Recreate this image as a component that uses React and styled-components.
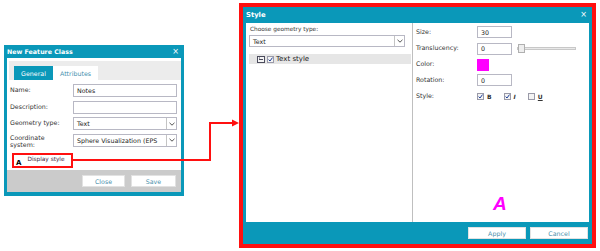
import React from 'react';
import styled, { createGlobalStyle } from 'styled-components';

const TEAL = '#0a98b9';
const RED = '#ff1010';

const GlobalStyle = createGlobalStyle`
  html, body {
    margin: 0;
    padding: 0;
    background: #fff;
  }
  body {
    font-family: 'DejaVu Sans', Verdana, sans-serif;
    color: #333;
  }
`;

const Canvas = styled.div`
  position: relative;
  width: 600px;
  height: 251px;
  overflow: hidden;
  display: flex;
  align-items: flex-start;
  background: #fff;
`;

const FeatureDialog = styled.div`
  box-sizing: border-box;
  width: 180px;
  height: 151px;
  margin: 45px 0 0 4px;
  padding: 0 3px 4px;
  background: ${TEAL};
  display: flex;
  flex-direction: column;
`;

const TitleBar = styled.div`
  display: flex;
  align-items: center;
  justify-content: space-between;
  height: ${p => p.$h}px;
  flex: none;
  padding: 0 2px 0 0;
  color: #fff;
  font-weight: bold;
  font-size: ${p => p.$size || 6.3}px;
`;

const CloseX = styled.span`
  font-size: 8px;
  font-weight: normal;
  line-height: 1;
`;

const FeatureBody = styled.div`
  flex: 1;
  background: #fff;
  display: flex;
  flex-direction: column;
`;

const TabStrip = styled.div`
  display: flex;
  align-items: flex-end;
  margin: 3px 0 0 2px;
  height: 19px;
  padding-left: 5px;
  background: #ececec;
`;

const Tab = styled.div`
  height: 14px;
  width: ${p => p.$w}px;
  display: flex;
  align-items: center;
  justify-content: center;
  font-size: 6.3px;
  background: ${p => (p.$active ? TEAL : '#fff')};
  color: ${p => (p.$active ? '#fff' : '#3f8fae')};
`;

const Form = styled.div`
  display: grid;
  grid-template-columns: 63px 104px;
  grid-auto-rows: 13px;
  row-gap: 3.5px;
  padding: 4px 0 0 3px;
`;

const Label = styled.div`
  font-size: 6.3px;
  color: #333;
  display: flex;
  align-items: center;
  line-height: 6.6px;
  padding-top: ${p => (p.$two ? 3 : 0)}px;
`;

const TextBox = styled.div`
  box-sizing: border-box;
  height: ${p => p.$h || 13}px;
  width: ${p => (p.$w ? `${p.$w}px` : '100%')};
  border: 1px solid #b8b8c4;
  background: #fff;
  font-size: 6.3px;
  padding-left: 3px;
  display: flex;
  align-items: center;
  color: #222;
`;

const Select = styled(TextBox)`
  justify-content: space-between;
  padding-right: 0;
  white-space: nowrap;
  overflow: hidden;
`;

const DropBtn = styled.span`
  flex: none;
  width: 9px;
  height: 100%;
  border-left: 1px solid #c4c4c4;
  display: flex;
  align-items: center;
  justify-content: center;
  background: #fff;
`;

const Callout = styled.div`
  box-sizing: border-box;
  margin: 6px 0 0 5px;
  width: 61px;
  height: 15px;
  border: 2px solid ${RED};
  display: flex;
  align-items: flex-start;
  padding: 0 0 0 2px;
  gap: 6px;
`;

const CalloutMark = styled.span`
  font-size: 7px;
  line-height: 7px;
  font-weight: bold;
  color: #000;
  margin-top: 5px;
`;

const CalloutText = styled.span`
  font-size: 5.8px;
  line-height: 7px;
  color: #3d1d3b;
  margin-top: 1px;
`;

const FeatureFooter = styled.div`
  height: 22px;
  flex: none;
  background: #cbcbcb;
  display: flex;
  justify-content: flex-end;
  align-items: flex-start;
  gap: 6px;
  padding: 5px 5px 0 0;
  box-sizing: border-box;
`;

const Button = styled.div`
  box-sizing: border-box;
  width: ${p => p.$w}px;
  height: 12px;
  background: #fff;
  border: 1px solid #e2e2e2;
  display: flex;
  align-items: center;
  justify-content: center;
  font-size: 6.3px;
  color: #4a90ad;
`;

const StyleDialog = styled.div`
  box-sizing: border-box;
  width: 357px;
  height: 245px;
  margin: 3px 0 0 55px;
  border: 4px solid ${RED};
  background: ${TEAL};
  display: flex;
  flex-direction: column;
  padding: 0 3px;
`;

const StyleContent = styled.div`
  height: 199px;
  flex: none;
  background: #fff;
  display: flex;
`;

const LeftPane = styled.div`
  width: 167px;
  flex: none;
  border-right: 1px solid #bfbfbf;
  padding: 3px 0 0 3px;
  box-sizing: border-box;
`;

const SmallCaption = styled.div`
  font-size: 5.8px;
  color: #333;
  height: 9px;
  padding-left: 1px;
`;

const TreeRow = styled.div`
  margin-top: 7px;
  height: 10px;
  width: 162px;
  background: #e6e6e6;
  display: flex;
  align-items: center;
  padding-left: 8px;
  box-sizing: border-box;
  gap: 2px;
  font-size: 7px;
  color: #222;
`;

const RightPane = styled.div`
  flex: 1;
  padding: 3px 0 0 3px;
  display: grid;
  grid-template-columns: 61px 1fr;
  grid-auto-rows: 13px;
  row-gap: 3px;
  align-content: start;
  position: relative;
`;

const FieldRow = styled.div`
  display: flex;
  align-items: center;
  gap: 5px;
`;

const Swatch = styled.div`
  width: 12px;
  height: 12px;
  background: #ff00ff;
`;

const Slider = styled.div`
  position: relative;
  width: 59px;
  height: 3px;
  border: 1px solid #c8c8c8;
  background: #e8e8e8;
  box-sizing: border-box;
`;

const Thumb = styled.div`
  position: absolute;
  left: 0;
  top: -4px;
  width: 7px;
  height: 9px;
  box-sizing: border-box;
  border: 1px solid #b0b0b0;
  background: #eee;
`;

const Check = styled.span`
  box-sizing: border-box;
  width: 7px;
  height: 7px;
  border: 1px solid #9a9aa8;
  background: #f4f4f4;
  display: inline-flex;
  align-items: center;
  justify-content: center;
  flex: none;
`;

const StyleOpt = styled.span`
  display: inline-flex;
  align-items: center;
  gap: 3px;
  font-size: 6px;
  font-weight: bold;
  font-style: ${p => (p.$italic ? 'italic' : 'normal')};
  text-decoration: ${p => (p.$under ? 'underline' : 'none')};
  color: #333;
  margin-right: 7px;
`;

const BigMark = styled.div`
  position: absolute;
  left: 80px;
  top: 170px;
  font-family: 'Liberation Sans', Arial, sans-serif;
  font-size: 19px;
  font-weight: bold;
  font-style: italic;
  color: #ff00ff;
`;

const StyleFooter = styled.div`
  flex: 1;
  display: flex;
  justify-content: flex-end;
  align-items: flex-start;
  gap: 4px;
  padding: 5px 1px 0 0;
`;

const Connector = styled.svg`
  position: absolute;
  left: 0;
  top: 0;
  pointer-events: none;
`;

const Chevron = () => (
  <svg width="6" height="4" viewBox="0 0 6 4">
    <path d="M0.5 0.8 L3 3.2 L5.5 0.8" fill="none" stroke="#555" strokeWidth="1" />
  </svg>
);

const Tick = () => (
  <svg width="5" height="5" viewBox="0 0 5 5">
    <path d="M0.6 2.6 L2 4 L4.5 0.6" fill="none" stroke="#1c3f9a" strokeWidth="1" />
  </svg>
);

const ListIcon = () => (
  <svg width="8" height="7" viewBox="0 0 8 7">
    <rect x="0.5" y="0.5" width="7" height="6" fill="#f4f4f4" stroke="#4b4b5c" />
    <path d="M2 3.5 H6 M2 2 H3" stroke="#4b4b5c" strokeWidth="1" />
  </svg>
);

const App = () => (
  <>
    <GlobalStyle />
    <Canvas>
      <FeatureDialog>
        <TitleBar $h={13}>
          <span>New Feature Class</span>
          <CloseX>×</CloseX>
        </TitleBar>
        <FeatureBody>
          <TabStrip>
            <Tab $active $w={39}>General</Tab>
            <Tab $w={45}>Attributes</Tab>
          </TabStrip>
          <Form>
            <Label>Name:</Label>
            <TextBox>Notes</TextBox>
            <Label>Description:</Label>
            <TextBox />
            <Label>Geometry type:</Label>
            <Select>
              Text
              <DropBtn><Chevron /></DropBtn>
            </Select>
            <Label $two>Coordinate<br />system:</Label>
            <Select>
              Sphere Visualization (EPS
              <DropBtn><Chevron /></DropBtn>
            </Select>
          </Form>
          <Callout>
            <CalloutMark>A</CalloutMark>
            <CalloutText>Display style</CalloutText>
          </Callout>
        </FeatureBody>
        <FeatureFooter>
          <Button $w={43}>Close</Button>
          <Button $w={45}>Save</Button>
        </FeatureFooter>
      </FeatureDialog>

      <StyleDialog>
        <TitleBar $h={16} $size={6.8}>
          <span>Style</span>
          <CloseX>×</CloseX>
        </TitleBar>
        <StyleContent>
          <LeftPane>
            <SmallCaption>Choose geometry type:</SmallCaption>
            <Select $h={12} $w={156}>
              Text
              <DropBtn><Chevron /></DropBtn>
            </Select>
            <TreeRow>
              <ListIcon />
              <Check><Tick /></Check>
              <span>Text style</span>
            </TreeRow>
          </LeftPane>
          <RightPane>
            <Label>Size:</Label>
            <TextBox $w={35} $h={12}>30</TextBox>
            <Label>Translucency:</Label>
            <FieldRow>
              <TextBox $w={35} $h={12}>0</TextBox>
              <Slider><Thumb /></Slider>
            </FieldRow>
            <Label>Color:</Label>
            <FieldRow><Swatch /></FieldRow>
            <Label>Rotation:</Label>
            <TextBox $w={35} $h={12}>0</TextBox>
            <Label>Style:</Label>
            <FieldRow>
              <StyleOpt><Check><Tick /></Check>B</StyleOpt>
              <StyleOpt $italic><Check><Tick /></Check>I</StyleOpt>
              <StyleOpt $under><Check />U</StyleOpt>
            </FieldRow>
            <BigMark>A</BigMark>
          </RightPane>
        </StyleContent>
        <StyleFooter>
          <Button $w={58}>Apply</Button>
          <Button $w={58}>Cancel</Button>
        </StyleFooter>
      </StyleDialog>

      <Connector width="600" height="251" viewBox="0 0 600 251">
        <polyline
          points="73,160 210,160 210,123 233,123"
          fill="none"
          stroke={RED}
          strokeWidth="2"
        />
        <polygon points="232,119.5 239,123 232,126.5" fill={RED} />
      </Connector>
    </Canvas>
  </>
);

export default App;
